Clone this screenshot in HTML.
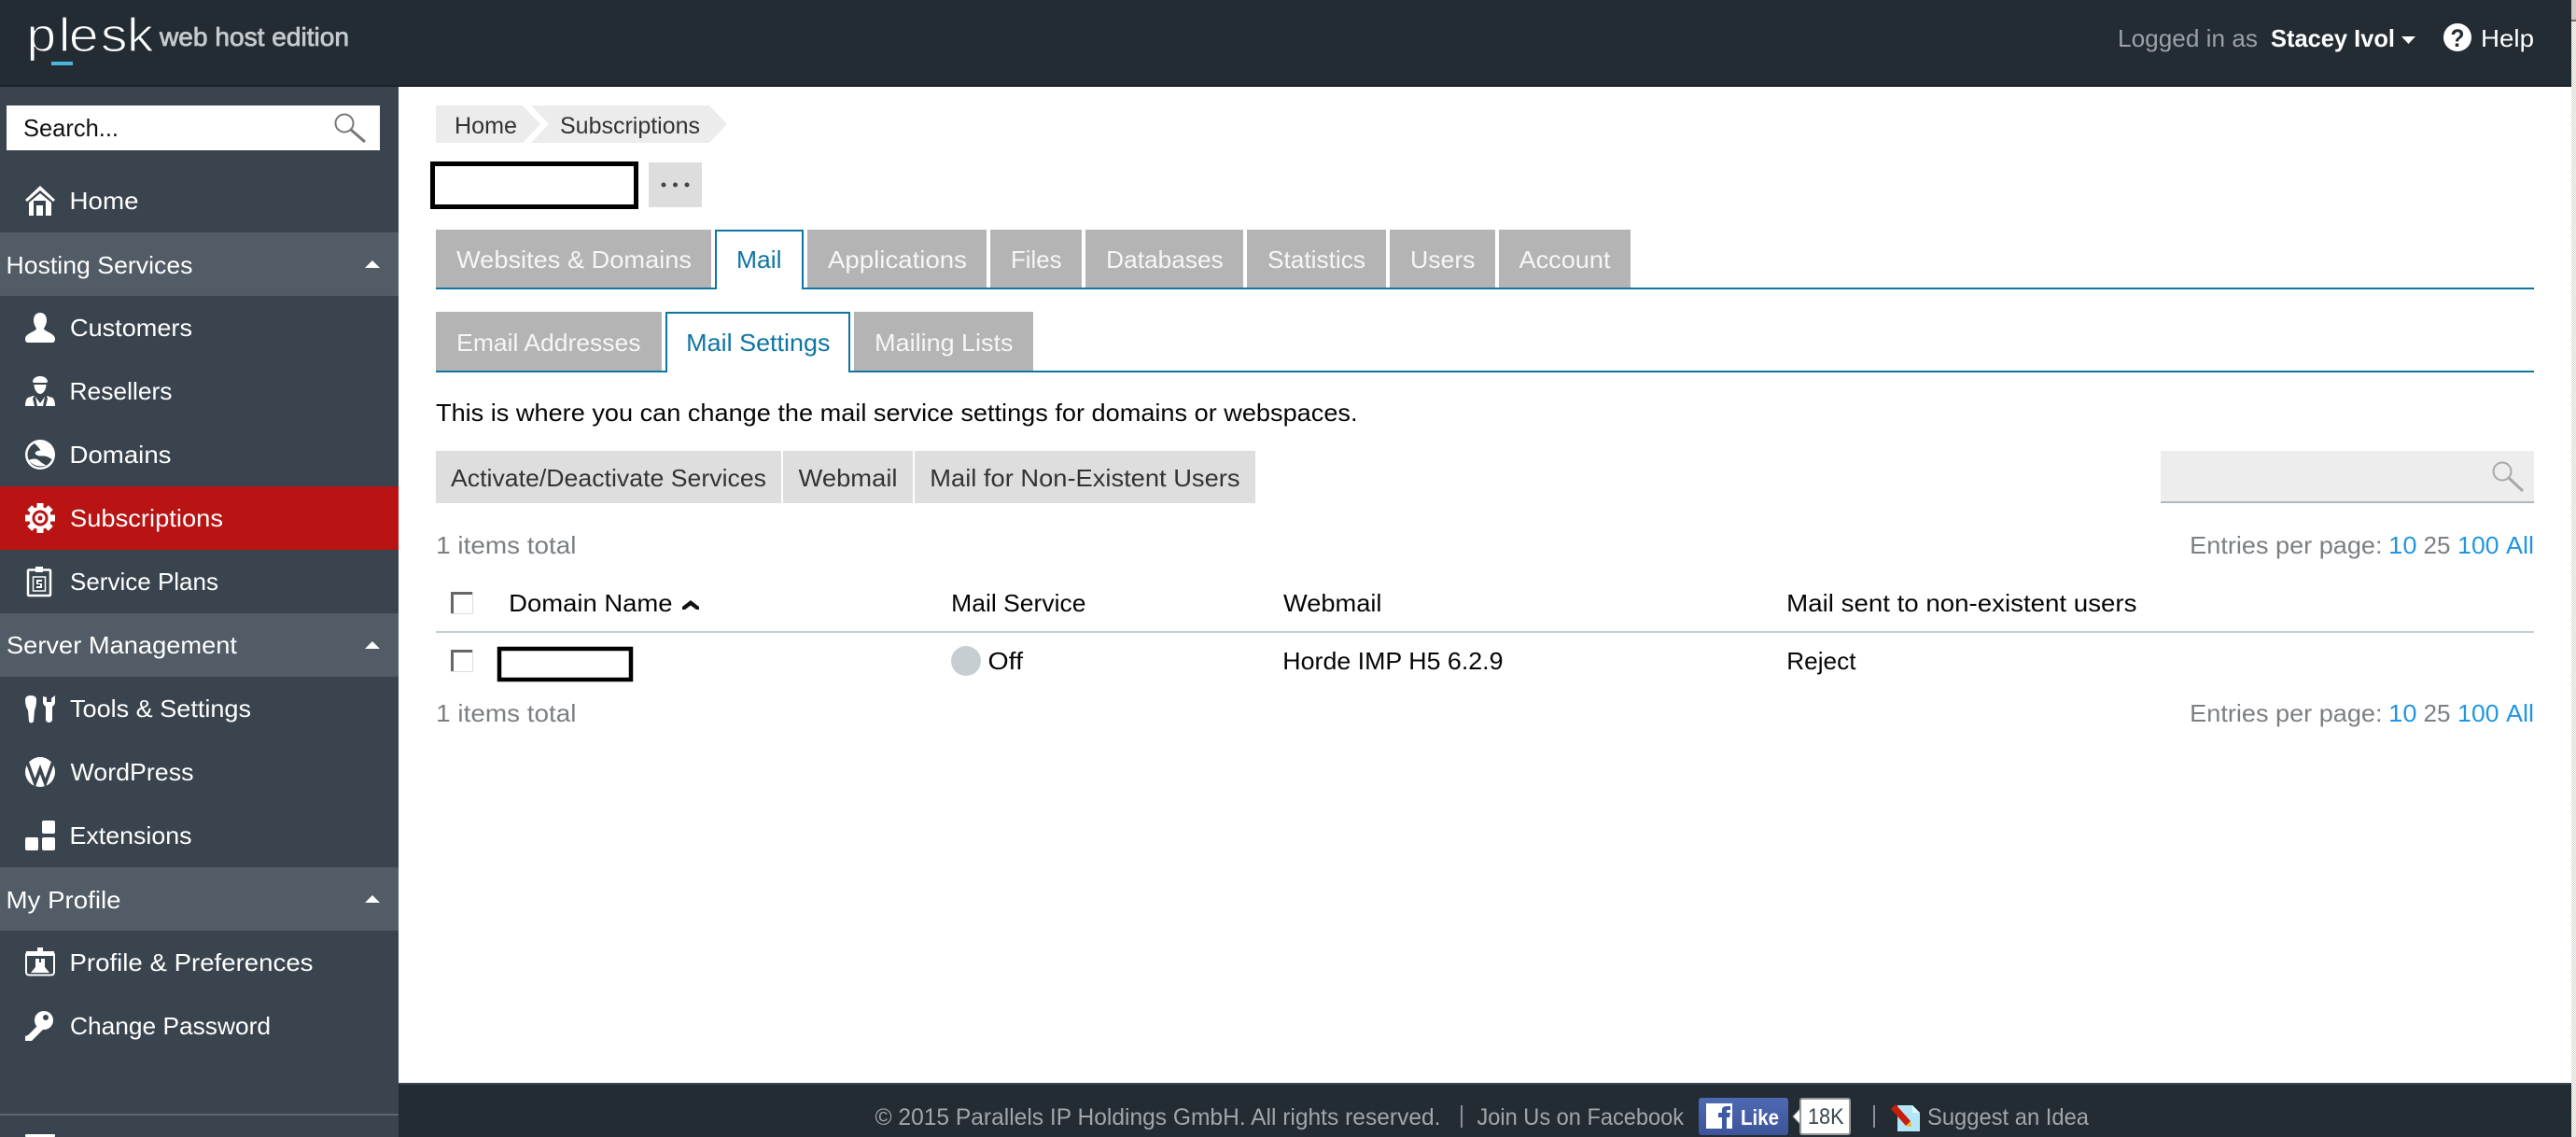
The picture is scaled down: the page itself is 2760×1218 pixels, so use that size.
<!DOCTYPE html>
<html lang="en">
<head>
<meta charset="utf-8">
<title>Plesk - Mail Settings</title>
<style>
html,body{margin:0;padding:0;width:2760px;height:1218px;overflow:hidden;background:#fff}
svg{display:block}
text{font-family:"Liberation Sans",sans-serif;font-size:26px}
.n text,text.n{fill:#fff}
.t text{fill:#f6f6f6}
.d text{fill:#333}
.k text{fill:#050505}
.g text{fill:#7b7f83}
.b{fill:#2196e0}
.f text{fill:#a2a6a9;font-size:25px}
</style>
</head>
<body>
<svg xmlns="http://www.w3.org/2000/svg" width="2760" height="1218" viewBox="0 0 2760 1218">
<defs>
<pattern id="dith" width="2" height="2" patternUnits="userSpaceOnUse"><rect width="2" height="2" fill="#fff"/><rect width="1" height="1" fill="#d4d0c8"/><rect x="1" y="1" width="1" height="1" fill="#d4d0c8"/></pattern>
<linearGradient id="fb" x1="0" y1="0" x2="0" y2="1"><stop offset="0" stop-color="#4e69b4"/><stop offset="1" stop-color="#3d5499"/></linearGradient>
</defs>

<!-- page -->
<rect width="2760" height="1218" fill="#fff"/>

<!-- header -->
<rect width="2755" height="92" fill="#232b33"/>
<rect y="91" width="2755" height="2" fill="#1b2128"/>
<g transform="translate(0 55) scale(1.12 1)"><text x="25.300 56 66 96.400 121.400" y="0" style="font-size:51px" fill="#fff" stroke="#232b33" stroke-width="1.200">plesk</text></g>
<rect x="55" y="66" width="23" height="4" fill="#4ab5e0"/>
<text x="171" y="49" textLength="203" lengthAdjust="spacingAndGlyphs" style="font-size:28px" fill="#c6cacd" stroke="#c6cacd" stroke-width=".8">web host edition</text>
<text x="2269" y="50" textLength="150" lengthAdjust="spacingAndGlyphs" fill="#9aa1a7">Logged in as</text>
<text x="2433" y="50" textLength="133" lengthAdjust="spacingAndGlyphs" fill="#fff" style="font-weight:bold">Stacey Ivol</text>
<path d="M2573 39h15l-7.500 8z" fill="#fff"/>
<circle cx="2633" cy="40" r="15" fill="#fff"/>
<text x="2625.500" y="50" textLength="15" lengthAdjust="spacingAndGlyphs" fill="#232b33" style="font-size:27px;font-weight:bold">?</text>
<text x="2658" y="50" textLength="57" lengthAdjust="spacingAndGlyphs" fill="#fff">Help</text>

<!-- sidebar -->
<rect y="93" width="427" height="1125" fill="#39444f"/>
<rect x="7" y="113" width="400" height="48" fill="#fff"/>
<text x="25" y="146" textLength="102" lengthAdjust="spacingAndGlyphs" fill="#111">Search...</text>
<circle cx="369" cy="132" r="9.500" fill="none" stroke="#777" stroke-width="2"/>
<path d="M376 139l15 13" stroke="#777" stroke-width="3" fill="none"/>

<rect y="249" width="427" height="68" fill="#525c66"/>
<rect y="657" width="427" height="68" fill="#525c66"/>
<rect y="929" width="427" height="68" fill="#525c66"/>
<rect y="521" width="427" height="68" fill="#b91313"/>
<rect y="1193" width="427" height="2" fill="#5d6770"/>
<path d="M391 287l8-8 8 8z M391 695l8-8 8 8z M391 967l8-8 8 8z" fill="#fff"/>

<g class="n">
<text x="74.500" y="224" textLength="74" lengthAdjust="spacingAndGlyphs">Home</text>
<text x="6.500" y="293" textLength="200" lengthAdjust="spacingAndGlyphs">Hosting Services</text>
<text x="75" y="360" textLength="131" lengthAdjust="spacingAndGlyphs">Customers</text>
<text x="74.500" y="428" textLength="110" lengthAdjust="spacingAndGlyphs">Resellers</text>
<text x="74.500" y="496" textLength="109" lengthAdjust="spacingAndGlyphs">Domains</text>
<text x="75" y="564" textLength="164" lengthAdjust="spacingAndGlyphs">Subscriptions</text>
<text x="75" y="632" textLength="159" lengthAdjust="spacingAndGlyphs">Service Plans</text>
<text x="7" y="700" textLength="247" lengthAdjust="spacingAndGlyphs">Server Management</text>
<text x="75" y="768" textLength="194" lengthAdjust="spacingAndGlyphs">Tools &amp; Settings</text>
<text x="75.500" y="836" textLength="132" lengthAdjust="spacingAndGlyphs">WordPress</text>
<text x="74.500" y="904" textLength="131" lengthAdjust="spacingAndGlyphs">Extensions</text>
<text x="6.500" y="973" textLength="123" lengthAdjust="spacingAndGlyphs">My Profile</text>
<text x="74.500" y="1040" textLength="261" lengthAdjust="spacingAndGlyphs">Profile &amp; Preferences</text>
<text x="75" y="1108" textLength="215" lengthAdjust="spacingAndGlyphs">Change Password</text>
</g>

<!-- sidebar icons -->
<g fill="#fff">
<path d="M43 199L27 214l2 2 14-12 14 12 2-2z"/>
<path d="M31 217l12-10 12 10v14H31z"/>
<rect x="36" y="215" width="13" height="16" fill="#39444f"/>
<rect x="39" y="220" width="7" height="11"/>

<path d="M43 335c-5 0-7 4-7 8 0 4 2 7 3 9 0 3-12 5-12 11q0 4 3 4h26q3 0 3-4c0-6-12-8-12-11 1-2 3-5 3-9 0-4-2-8-7-8z"/>

<path d="M43 403c-5 0-8 3-8 6l1 1h14l1-1c0-3-3-6-8-6z"/>
<path d="M36.500 412h13c0 5-3 10-6.500 10s-6.500-5-6.500-10z"/>
<path d="M36 424l-6 2c-2 1-3 5-3 9h10l-2-8 2-3zM50 424l6 2c2 1 3 5 3 9H49l2-8-1-3zM38 425l5 7 5-7-2 10h-6z"/>

<circle cx="43" cy="487" r="16"/>
<circle cx="43" cy="487" r="13.500" fill="#39444f"/>
<path d="M36 474.500q9-3 17 2 6 6 3.500 16-7-5-12-4-6 0-7-3 1-3 6-3-3-5-7.500-8zM30.500 493q7-3 11 0 3 3 8 5.500-11 3.500-19-5.500z"/>

<g stroke="#fff" stroke-width="7" fill="none"><path d="M43 539v32M27 555h32M31.700 543.700l22.600 22.600M54.300 543.700l-22.600 22.600"/></g>
<circle cx="43" cy="555" r="12"/>
<circle cx="43" cy="555" r="8.500" fill="#b91313"/>
<circle cx="43" cy="555" r="5.500"/>
<circle cx="43" cy="555" r="2.500" fill="#b91313"/>

<rect x="30" y="610.500" width="24" height="27.500" rx="1" fill="none" stroke="#fff" stroke-width="2.500"/>
<rect x="38" y="607" width="8" height="6"/>
<rect x="35.500" y="618" width="13" height="15" fill="none" stroke="#fff" stroke-width="1.500"/>
<path d="M39 621h6v2h-4v2h4v5h-6v-2h4v-2h-4z"/>

<path d="M27 750q0-5 6-5t6 5q0 6-2 11l-1 12q-3 3-5 0l-1-12q-3-5-3-11z"/>
<path d="M46 746v6q0 3 3 5v15q3.500 4 7 0v-15q3-2 3-5v-7l-4 3v4h-5v-5z"/>

<circle cx="43" cy="827" r="16"/>
<path d="M29.500 817l8 22 5.500-15 5.500 15 8-22" fill="none" stroke="#39444f" stroke-width="3.500"/>

<rect x="45" y="879" width="14" height="14" rx="2"/>
<rect x="27" y="897" width="14" height="14" rx="2"/>
<rect x="45" y="897" width="14" height="14" rx="2"/>

<rect x="28" y="1020" width="30" height="24.500" rx="3" fill="none" stroke="#fff" stroke-width="2"/>
<rect x="28" y="1019" width="30" height="5"/>
<rect x="40" y="1015" width="6" height="6"/>
<path d="M33 1042l5-6v-9h4v4h2v-4h4v9l5 6z"/>

<circle cx="47" cy="1093" r="10"/>
<path d="M41 1098l5 5-12 12h-7v-5l3-1z"/>
<circle cx="49" cy="1090" r="3" fill="#39444f"/>
<rect x="27" y="1215" width="32" height="3" rx="1"/>
</g>

<!-- breadcrumb -->
<path d="M467 113h93l19 20-19 20h-93z" fill="#ececec"/>
<path d="M569 113h191l19 20-19 20H569l19-20z" fill="#ececec"/>
<g class="d">
<text x="487" y="143" textLength="67" lengthAdjust="spacingAndGlyphs" style="font-size:25px">Home</text>
<text x="600" y="143" textLength="150" lengthAdjust="spacingAndGlyphs" style="font-size:25px">Subscriptions</text>
</g>

<!-- title -->
<rect x="463.500" y="175.500" width="218" height="46" fill="#fff" stroke="#000" stroke-width="5"/>
<rect x="695" y="174" width="57" height="48" fill="#ddd"/>
<circle cx="711" cy="198" r="2.500" fill="#444"/><circle cx="723.500" cy="198" r="2.500" fill="#444"/><circle cx="736" cy="198" r="2.500" fill="#444"/>

<!-- tabs -->
<g fill="#b4b4b4">
<rect x="467" y="246" width="295" height="63"/>
<rect x="865" y="246" width="192" height="63"/>
<rect x="1061" y="246" width="98" height="63"/>
<rect x="1163" y="246" width="169" height="63"/>
<rect x="1336" y="246" width="149" height="63"/>
<rect x="1489" y="246" width="113" height="63"/>
<rect x="1606" y="246" width="141" height="63"/>
</g>
<rect x="467" y="308" width="2248" height="2" fill="#0f75a3"/>
<path d="M767 310V247h93v63" fill="#fff" stroke="#0f75a3" stroke-width="2"/>
<g class="t">
<text x="489" y="287" textLength="252" lengthAdjust="spacingAndGlyphs">Websites &amp; Domains</text>
<text x="887" y="287" textLength="149" lengthAdjust="spacingAndGlyphs">Applications</text>
<text x="1083" y="287" textLength="54.500" lengthAdjust="spacingAndGlyphs">Files</text>
<text x="1185.200" y="287" textLength="125.500" lengthAdjust="spacingAndGlyphs">Databases</text>
<text x="1358" y="287" textLength="105" lengthAdjust="spacingAndGlyphs">Statistics</text>
<text x="1511" y="287" textLength="69.500" lengthAdjust="spacingAndGlyphs">Users</text>
<text x="1627.500" y="287" textLength="98" lengthAdjust="spacingAndGlyphs">Account</text>
</g>
<text x="789" y="287" textLength="48.500" lengthAdjust="spacingAndGlyphs" fill="#0f75a3">Mail</text>

<!-- sub tabs -->
<g fill="#b4b4b4">
<rect x="467" y="334" width="242" height="64"/>
<rect x="915" y="334" width="192" height="64"/>
</g>
<rect x="467" y="397" width="2248" height="2" fill="#0f75a3"/>
<path d="M714 399V335h196v64" fill="#fff" stroke="#0f75a3" stroke-width="2"/>
<g class="t">
<text x="489.200" y="376" textLength="197.300" lengthAdjust="spacingAndGlyphs">Email Addresses</text>
<text x="937.200" y="376" textLength="148.300" lengthAdjust="spacingAndGlyphs">Mailing Lists</text>
</g>
<text x="735.200" y="376" textLength="154.300" lengthAdjust="spacingAndGlyphs" fill="#0f75a3">Mail Settings</text>

<!-- description -->
<text x="467" y="451" textLength="987.500" lengthAdjust="spacingAndGlyphs" fill="#050505">This is where you can change the mail service settings for domains or webspaces.</text>

<!-- toolbar -->
<g fill="#dedede">
<rect x="467" y="483" width="370" height="56"/>
<rect x="839" y="483" width="139" height="56"/>
<rect x="980" y="483" width="365" height="56"/>
</g>
<g class="d">
<text x="483" y="521" textLength="338" lengthAdjust="spacingAndGlyphs">Activate/Deactivate Services</text>
<text x="855.500" y="521" textLength="106" lengthAdjust="spacingAndGlyphs">Webmail</text>
<text x="996.300" y="521" textLength="332.200" lengthAdjust="spacingAndGlyphs">Mail for Non-Existent Users</text>
</g>
<rect x="2315" y="483" width="400" height="56" fill="#ededed"/>
<rect x="2315" y="537" width="400" height="2" fill="#b0b8be"/>
<circle cx="2681" cy="505" r="9.500" fill="none" stroke="#a8a8a8" stroke-width="2"/>
<path d="M2688 512l15 14" stroke="#a8a8a8" stroke-width="3" fill="none"/>

<!-- pager -->
<g class="g">
<text x="467.200" y="593" textLength="150.300" lengthAdjust="spacingAndGlyphs">1 items total</text>
<text x="2346.200" y="593" textLength="206.300" lengthAdjust="spacingAndGlyphs">Entries per page:</text>
<text x="2596.500" y="593" textLength="29" lengthAdjust="spacingAndGlyphs">25</text>
<text x="467.200" y="773" textLength="150.300" lengthAdjust="spacingAndGlyphs">1 items total</text>
<text x="2346.200" y="773" textLength="206.300" lengthAdjust="spacingAndGlyphs">Entries per page:</text>
<text x="2596.500" y="773" textLength="29" lengthAdjust="spacingAndGlyphs">25</text>
</g>
<text class="b" x="2559.200" y="593" textLength="30.300" lengthAdjust="spacingAndGlyphs">10</text>
<text class="b" x="2633.200" y="593" textLength="44.300" lengthAdjust="spacingAndGlyphs">100</text>
<text class="b" x="2685" y="593" textLength="30" lengthAdjust="spacingAndGlyphs">All</text>
<text class="b" x="2559.200" y="773" textLength="30.300" lengthAdjust="spacingAndGlyphs">10</text>
<text class="b" x="2633.200" y="773" textLength="44.300" lengthAdjust="spacingAndGlyphs">100</text>
<text class="b" x="2685" y="773" textLength="30" lengthAdjust="spacingAndGlyphs">All</text>

<!-- table -->
<rect x="483" y="634" width="24" height="24" fill="#ddd"/><rect x="483" y="634" width="23" height="23" fill="#666"/><rect x="486" y="637" width="20" height="20" fill="#fff"/>
<g class="k">
<text x="545.200" y="655" textLength="175.300" lengthAdjust="spacingAndGlyphs">Domain Name</text>
<text x="1019.200" y="655" textLength="144.300" lengthAdjust="spacingAndGlyphs">Mail Service</text>
<text x="1375" y="655" textLength="105.500" lengthAdjust="spacingAndGlyphs">Webmail</text>
<text x="1914.200" y="655" textLength="375.300" lengthAdjust="spacingAndGlyphs">Mail sent to non-existent users</text>
<text x="1058.500" y="717" textLength="37.500" lengthAdjust="spacingAndGlyphs">Off</text>
<text x="1374.300" y="717" textLength="236.200" lengthAdjust="spacingAndGlyphs">Horde IMP H5 6.2.9</text>
<text x="1914.200" y="717" textLength="74.300" lengthAdjust="spacingAndGlyphs">Reject</text>
</g>
<path d="M731 650l9-7 9 7v3h-3l-6-4.500-6 4.500h-3z" fill="#111"/>
<rect x="467" y="676" width="2248" height="2" fill="#c3cfd6"/>
<rect x="483" y="696" width="24" height="24" fill="#ddd"/><rect x="483" y="696" width="23" height="23" fill="#666"/><rect x="486" y="699" width="20" height="20" fill="#fff"/>
<rect x="535" y="695" width="141" height="33" fill="#fff" stroke="#000" stroke-width="4.500"/>
<circle cx="1035" cy="708" r="16" fill="#c6ced2"/>

<!-- footer -->
<rect x="427" y="1160" width="2328" height="58" fill="#232b33"/>
<rect x="427" y="1160" width="2328" height="2" fill="#39444f"/>
<g class="f">
<text x="937.500" y="1205" textLength="606" lengthAdjust="spacingAndGlyphs">© 2015 Parallels IP Holdings GmbH. All rights reserved.</text>
<text x="1582.500" y="1205" textLength="221.500" lengthAdjust="spacingAndGlyphs">Join Us on Facebook</text>
<text x="2065" y="1205" textLength="173" lengthAdjust="spacingAndGlyphs">Suggest an Idea</text>
</g>
<rect x="1565" y="1184" width="2" height="24" fill="#8a9096"/>
<rect x="2007" y="1184" width="2" height="24" fill="#8a9096"/>
<rect x="1820" y="1176" width="96" height="40" rx="3" fill="url(#fb)"/>
<rect x="1828" y="1182" width="28" height="27" fill="#fff"/>
<path d="M1845 1209v-12h-4v-5h4v-3q0-4 5-4h4v4h-3q-1 0-1 1v2h4l-1 5h-3v12z" fill="#3f5aa4"/>
<text x="1865" y="1205" textLength="41" lengthAdjust="spacingAndGlyphs" fill="#fff" style="font-size:23px;font-weight:bold">Like</text>
<path d="M1929.500 1187l-8.500 9 8.500 9z" fill="#fff" stroke="#999" stroke-width="1"/>
<rect x="1929" y="1177" width="53" height="38" rx="2" fill="#fff" stroke="#999" stroke-width="2"/>
<text x="1937" y="1204" textLength="38.500" lengthAdjust="spacingAndGlyphs" fill="#3a4450" style="font-size:24px">18K</text>
<path d="M2033 1184h16l8 8v20h-24z" fill="#b4e6fa"/>
<path d="M2049 1184v8h8z" fill="#e4f6fd"/>
<path d="M2026 1188l5-5 16 18-5 5z" fill="#c81d0a"/>
<path d="M2042 1206l5-5 1 6z" fill="#f2b21c"/>

<!-- scrollbar -->
<rect x="2755" width="5" height="1218" fill="url(#dith)"/>
<rect x="2755" width="5" height="21" fill="#cfcbc4"/>
<rect x="2755" y="21" width="5" height="2" fill="#6f6b66"/>
</svg>
</body>
</html>
